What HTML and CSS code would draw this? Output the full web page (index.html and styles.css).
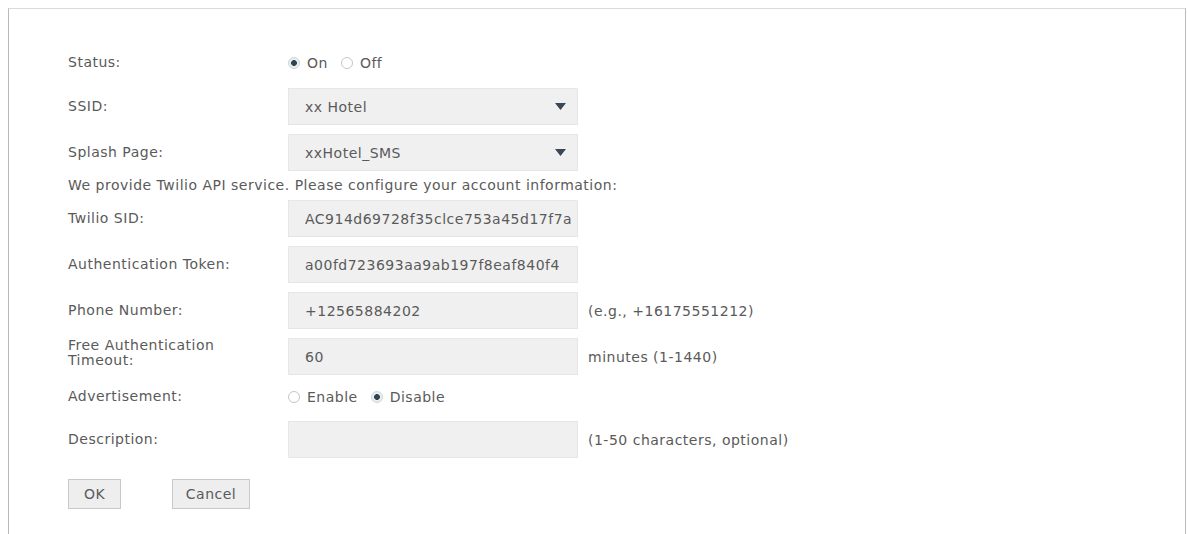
FILE: index.html
```html
<!DOCTYPE html>
<html>
<head>
    <meta charset="UTF-8">
    <title>SMS Portal</title>
    <link rel="stylesheet" href="styles.css">
</head>
<body>
    <div class="panel">
        <form class="form">
            <div class="row row-status">
                <span class="label">Status:</span>
                <div class="radios">
                    <label class="radio-item"><input type="radio" name="status" checked> On</label>
                    <label class="radio-item"><input type="radio" name="status"> Off</label>
                </div>
            </div>

            <div class="row">
                <span class="label">SSID:</span>
                <div class="select">
                    <span>xx Hotel</span>
                    <svg class="arrow" width="11" height="7" viewBox="0 0 11 7"><path d="M0 0h11L5.5 7z" fill="#3b4853"/></svg>
                </div>
            </div>

            <div class="row">
                <span class="label">Splash Page:</span>
                <div class="select">
                    <span>xxHotel_SMS</span>
                    <svg class="arrow" width="11" height="7" viewBox="0 0 11 7"><path d="M0 0h11L5.5 7z" fill="#3b4853"/></svg>
                </div>
            </div>

            <p class="info">We provide Twilio API service. Please configure your account information:</p>

            <div class="row">
                <span class="label">Twilio SID:</span>
                <input class="field" type="text" value="AC914d69728f35clce753a45d17f7a">
            </div>

            <div class="row">
                <span class="label">Authentication Token:</span>
                <input class="field" type="text" value="a00fd723693aa9ab197f8eaf840f4">
            </div>

            <div class="row">
                <span class="label">Phone Number:</span>
                <input class="field" type="text" value="+12565884202">
                <span class="hint">(e.g., +16175551212)</span>
            </div>

            <div class="row">
                <span class="label label-wrap">Free Authentication Timeout:</span>
                <input class="field" type="text" value="60">
                <span class="hint">minutes (1-1440)</span>
            </div>

            <div class="row row-radio">
                <span class="label">Advertisement:</span>
                <div class="radios">
                    <label class="radio-item"><input type="radio" name="ad"> Enable</label>
                    <label class="radio-item"><input type="radio" name="ad" checked> Disable</label>
                </div>
            </div>

            <div class="row">
                <span class="label">Description:</span>
                <input class="field" type="text" value="">
                <span class="hint">(1-50 characters, optional)</span>
            </div>

            <div class="buttons">
                <button type="button" class="btn btn-ok">OK</button>
                <button type="button" class="btn">Cancel</button>
            </div>
        </form>
    </div>
</body>
</html>
```

FILE: styles.css
```css
/* Общие настройки страницы */
body {
  margin: 0;
  background: #fff;
  font-family: 'DejaVu Sans', sans-serif;
  font-size: 14px;
  letter-spacing: 0.5px;
  color: #5a5a5a;
  overflow: hidden;
}

/* Рамка вокруг формы */
.panel {
  margin: 8px 1px 0 8px;
  height: calc(100vh - 8px);
  box-sizing: border-box;
  border: 1px solid #dadada;
  border-bottom: none;
  border-left-color: #b4bcbc;
  border-right-color: #b4bcbc;
  padding: 33px 0 0 59px;
}

.form {
  margin: 0;
}

/* Строка формы: подпись + поле + подсказка */
.row {
  display: flex;
  align-items: center;
  height: 37px;
  margin-bottom: 9px;
}

.row-status {
  margin-top: 2px;
  margin-bottom: 7px;
}

.row-radio {
  height: 29px;
  margin-top: -2px;
  margin-bottom: 10px;
}

.label {
  width: 220px;
  flex-shrink: 0;
  line-height: 15px;
  padding-right: 20px;
  box-sizing: border-box;
}

.label-wrap {
  padding-bottom: 8px;
}

.radios {
  display: flex;
  gap: 13px;
}

.radio-item {
  display: flex;
  align-items: center;
  gap: 7px;
}

.radio-item input {
  appearance: none;
  -webkit-appearance: none;
  margin: 0;
  width: 12px;
  height: 12px;
  border: 1px solid #c6c6c6;
  border-radius: 50%;
  background: #fff;
  box-sizing: border-box;
}

.radio-item input:checked {
  background: radial-gradient(circle, #2f4650 0 2.6px, #e9eeee 3.2px);
  border-color: #cfd6d6;
}

/* Выпадающий список и текстовые поля */
.select,
.field {
  width: 290px;
  height: 37px;
  box-sizing: border-box;
  background: #f0f0f0;
  border: 1px solid #e6e6e6;
  color: #5a5a5a;
  font-family: 'DejaVu Sans', sans-serif;
  font-size: 14px;
  letter-spacing: 0.5px;
}

.select {
  display: flex;
  align-items: center;
  justify-content: space-between;
  padding: 0 11px 0 16px;
}

.field {
  padding: 0 4px 0 16px;
  outline: none;
}

.hint {
  margin-left: 10px;
}

.info {
  margin: -4px 0 6px 0;
  line-height: 18px;
}

/* Кнопки */
.buttons {
  display: flex;
  padding-top: 12px;
}

.btn {
  width: 78px;
  height: 30px;
  background: #eee;
  border: 1px solid #c9c9c9;
  color: #5a5a5a;
  font-family: 'DejaVu Sans', sans-serif;
  font-size: 14px;
  letter-spacing: 0.5px;
  padding: 0;
}

.btn-ok {
  width: 53px;
  margin-right: 51px;
}
```
